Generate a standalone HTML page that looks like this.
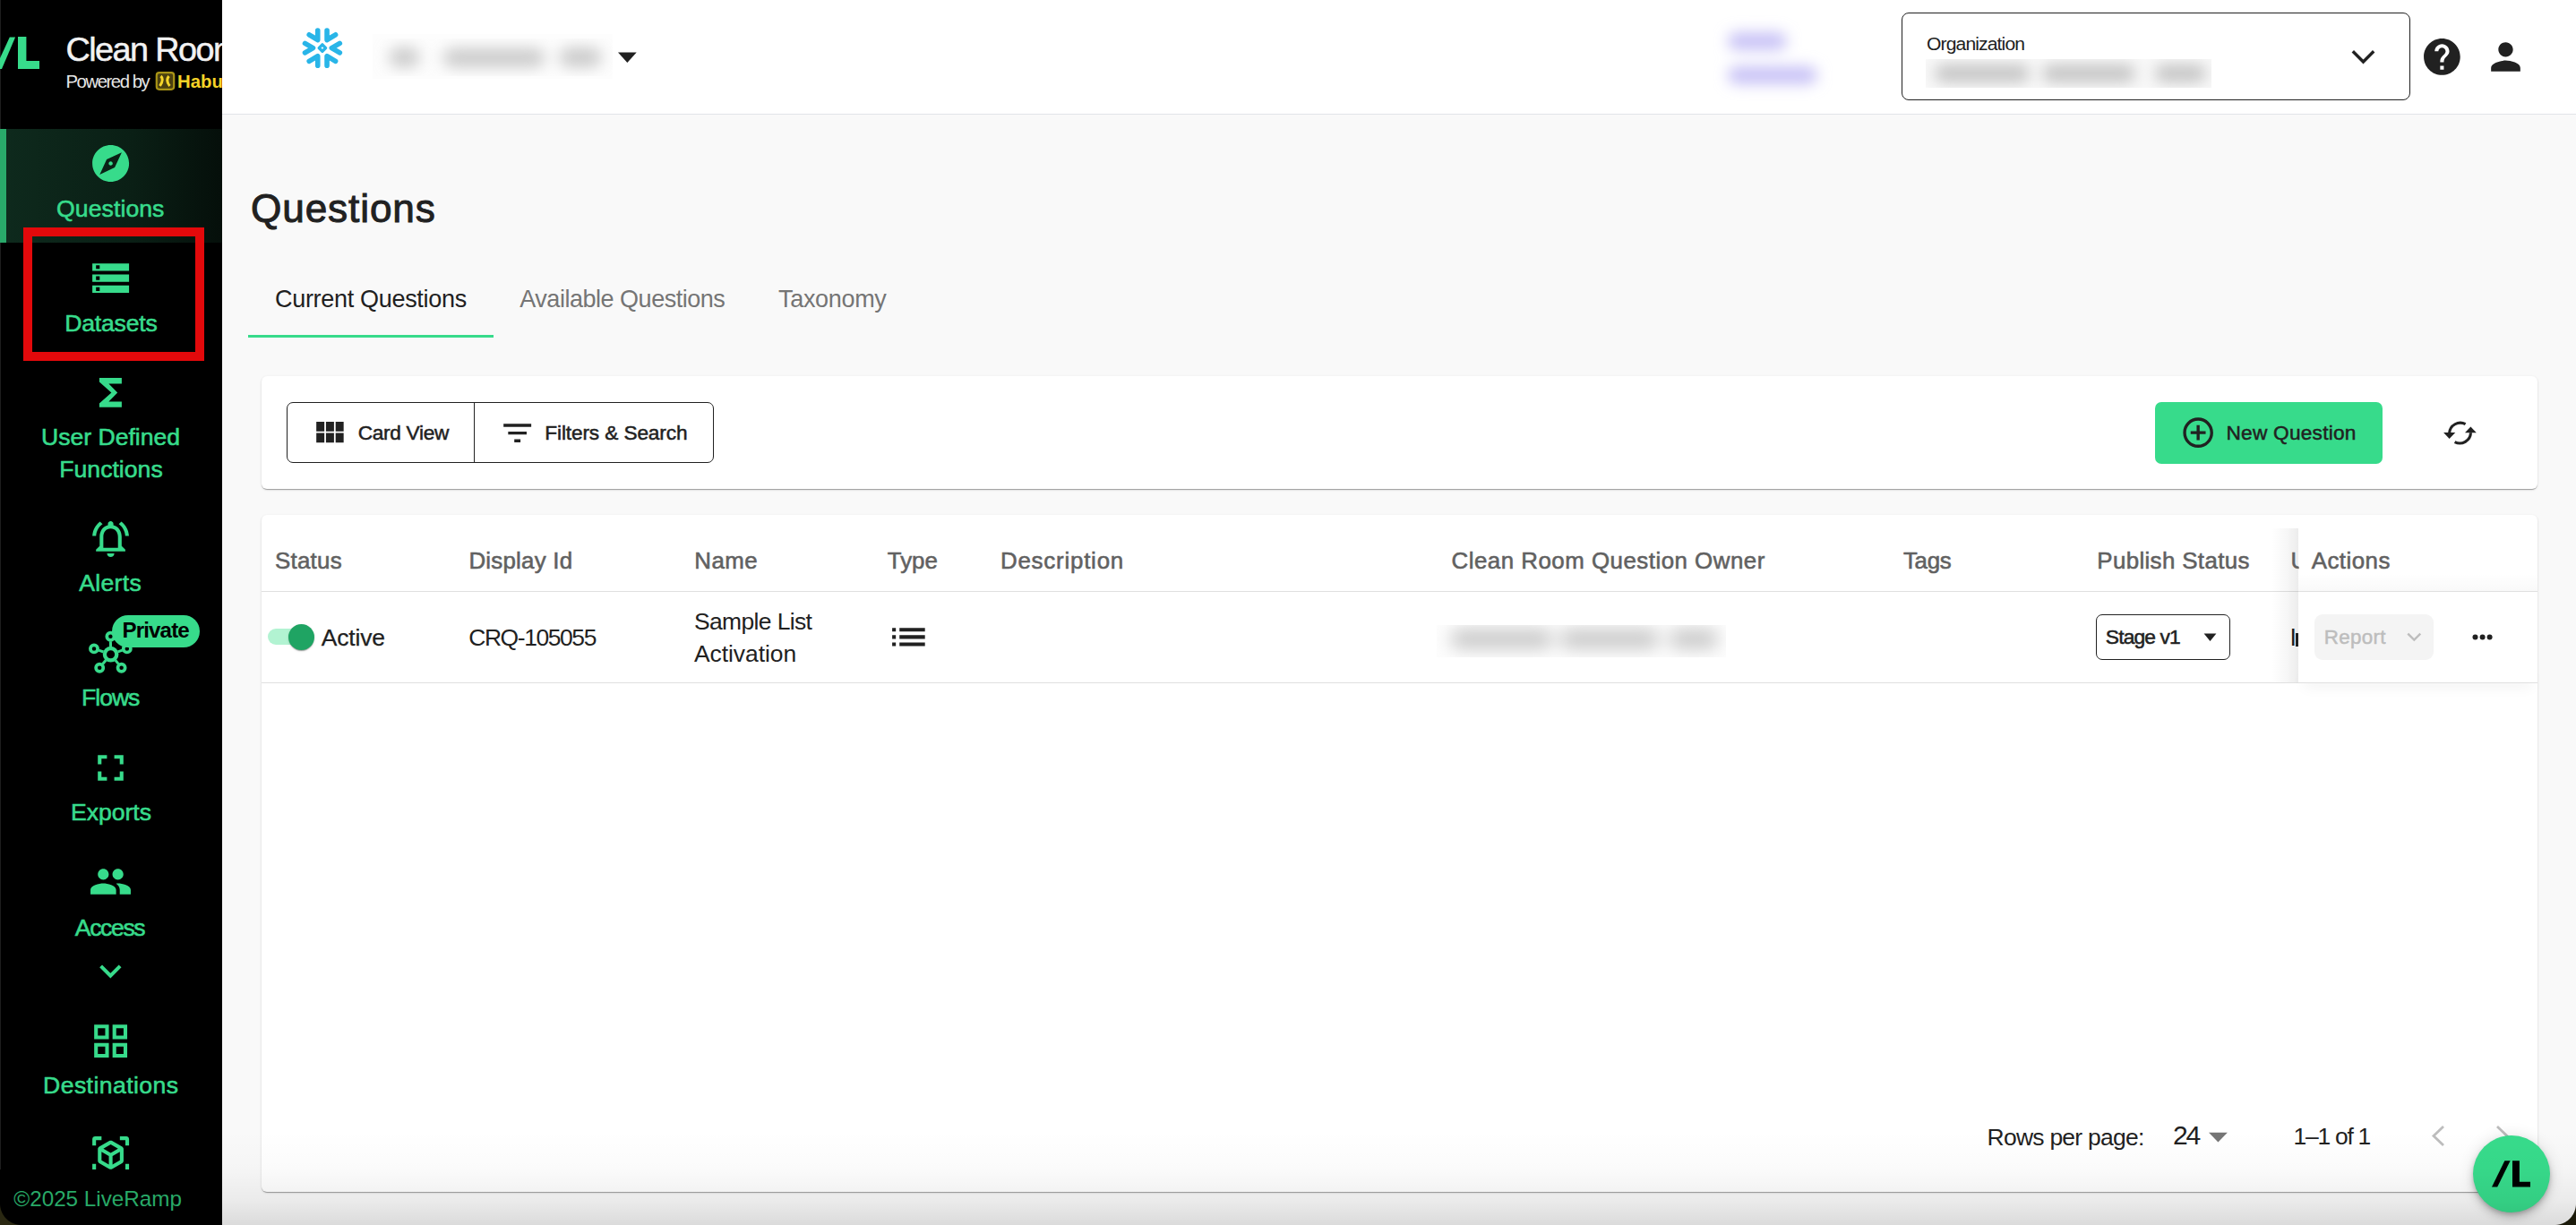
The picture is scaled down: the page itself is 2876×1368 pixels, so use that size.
<!DOCTYPE html>
<html><head><meta charset="utf-8"><style>
*{margin:0;padding:0;box-sizing:border-box}
html,body{width:2876px;height:1368px;overflow:hidden;background:#f9f9f9;font-family:"Liberation Sans",sans-serif;position:relative}
.t{position:absolute;white-space:nowrap}
.a{position:absolute}
</style></head><body>
<div class="a" style="left:248px;top:0px;width:2628px;height:127px;background:#fff"></div><div class="a" style="left:248px;top:127px;width:2628px;height:1px;background:#e1e4e8"></div><div class="a" style="left:0px;top:0px;width:248px;height:1368px;background:#000"></div><div class="a" style="left:0px;top:0px;width:1.2px;height:1368px;background:#1e1e1e"></div><div class="a" style="left:0px;top:144px;width:248px;height:127px;background:linear-gradient(90deg,#0e2a1d 0%,#0a1f15 60%,#050f0a 100%)"></div><div class="a" style="left:0px;top:144px;width:7px;height:127px;background:#29a96a"></div><svg class="a" style="left:0;top:0" width="248" height="130"><polygon fill="#37db8b" points="10.8,41.6 17.1,41.6 2.0,77 -5.5,77"/><polygon fill="#37db8b" points="20,41 29.4,41 29.4,68 44,68 44,77 20,77"/></svg><div class="a" style="left:0;top:0;width:248px;height:130px;overflow:hidden"><div class="t" style="left:73.50px;top:36.90px;font-size:37.79px;line-height:37.79px;font-weight:400;color:#f2f2f2;letter-spacing:-1.568px;-webkit-text-stroke:0.5px #f2f2f2;">Clean Room</div><div class="t" style="left:73.50px;top:80.67px;font-size:20.35px;line-height:20.35px;font-weight:400;color:#e6e6e6;letter-spacing:-1.471px;">Powered by</div><svg class="a" style="left:170px;top:76px" width="30" height="30" viewBox="170 76 30 30"><rect x="174.8" y="81.2" width="19.4" height="18.6" rx="3" fill="#4a4010" stroke="#a89416" stroke-width="2.2"/><g fill="none" stroke="#f5d52a" stroke-width="3"><path d="M179.5,85 Q183.5,88.5 178.5,96"/><path d="M188.5,85 Q184.5,90 189.5,96"/></g></svg><div class="t" style="left:198.00px;top:81.27px;font-size:20.35px;line-height:20.35px;font-weight:700;color:#f5d327;letter-spacing:0.000px;">Habu</div></div><div class="a" style="left:26.3px;top:253.8px;width:201.5px;height:149.2px;border:10px solid #e3090b"></div><svg class="a" style="left:98.90px;top:157.90px;" width="49.20" height="49.20" viewBox="0 0 24 24"><path fill="#37db8b" d="M12 10.9c-.61 0-1.1.49-1.1 1.1s.49 1.1 1.1 1.1c.61 0 1.1-.49 1.1-1.1s-.49-1.1-1.1-1.1zM12 2C6.48 2 2 6.48 2 12s4.48 10 10 10 10-4.48 10-10S17.52 2 12 2zm2.19 12.19L6 18l3.81-8.19L18 6l-3.81 8.19z"/></svg><svg class="a" style="left:99.00px;top:285.80px;" width="49.20" height="49.20" viewBox="0 0 24 24"><path fill="#37db8b" d="M2 20h20v-4H2v4zm2-3h2v2H4v-2zM2 4v4h20V4H2zm4 3H4V5h2v2zm-4 7h20v-4H2v4zm2-3h2v2H4v-2z"/></svg><svg class="a" style="left:0;top:0" width="248" height="470"><polygon fill="#37db8b" points="110.9,422 135.9,422 135.9,428.5 121.4,428.5 131.2,438.4 121.4,448.6 135.9,448.6 135.9,454.8 110.9,454.8 110.9,450.5 124.4,438.4 110.9,426.6"/></svg><svg class="a" style="left:99.05px;top:576.90px;" width="49.10" height="49.10" viewBox="0 0 24 24"><path fill="#37db8b" d="M12 22c1.1 0 2-.9 2-2h-4c0 1.1.9 2 2 2zm6-6v-5c0-3.07-1.63-5.64-4.5-6.32V4c0-.83-.67-1.5-1.5-1.5s-1.5.67-1.5 1.5v.68C7.64 5.36 6 7.92 6 11v5l-2 2v1h16v-1l-2-2zm-2 1H8v-6c0-2.48 1.51-4.5 4-4.5s4 2.02 4 4.5v6zM7.58 4.08L6.16 2.66C3.76 4.49 2.18 7.31 2.03 10.5h2c.15-2.65 1.51-4.97 3.55-6.42zm12.39 6.42h2c-.15-3.19-1.73-6.01-4.12-7.84l-1.42 1.42c2.02 1.45 3.39 3.77 3.54 6.42z"/></svg><svg class="a" style="left:99.00px;top:833.00px;" width="49.00" height="49.00" viewBox="0 0 24 24"><path fill="#37db8b" d="M7 14H5v5h5v-2H7v-3zm-2-4h2V7h3V5H5v5zm12 7h-3v2h5v-5h-2v3zM14 5v2h3v3h2V5h-5z"/></svg><svg class="a" style="left:99.00px;top:959.80px;" width="49.00" height="49.00" viewBox="0 0 24 24"><path fill="#37db8b" d="M16 11c1.66 0 2.99-1.34 2.99-3S17.66 5 16 5c-1.66 0-3 1.34-3 3s1.34 3 3 3zm-8 0c1.66 0 2.99-1.34 2.99-3S9.66 5 8 5C6.34 5 5 6.34 5 8s1.34 3 3 3zm0 2c-2.33 0-7 1.17-7 3.5V19h14v-2.5c0-2.33-4.67-3.5-7-3.5zm8 0c-.29 0-.62.02-.97.05 1.16.84 1.97 1.97 1.97 3.45V19h6v-2.5c0-2.33-4.67-3.5-7-3.5z"/></svg><svg class="a" style="left:98.80px;top:1059.60px;" width="48.70" height="48.70" viewBox="0 0 24 24"><path fill="#37db8b" d="M16.59 8.59L12 13.17 7.41 8.59 6 10l6 6 6-6z"/></svg><svg class="a" style="left:98.85px;top:1137.90px;" width="49.20" height="49.20" viewBox="0 0 24 24"><path fill="#37db8b" d="M3 3v8h8V3H3zm6 6H5V5h4v4zm-6 4v8h8v-8H3zm6 6H5v-4h4v4zm4-16v8h8V3h-8zm6 6h-4V5h4v4zm-6 4v8h8v-8h-8zm6 6h-4v-4h4v4z"/></svg><svg class="a" style="left:99.00px;top:1265.10px;" width="49.20" height="49.20" viewBox="0 0 24 24"><path fill="#37db8b" d="M18.25 7.6l-5.5-3.18c-.46-.27-1.04-.27-1.5 0L5.75 7.6c-.46.27-.75.76-.75 1.3v6.35c0 .54.29 1.03.75 1.3l5.5 3.18c.46.27 1.04.27 1.5 0l5.5-3.18c.46-.27.75-.76.75-1.3V8.9c0-.54-.29-1.03-.75-1.3zM7 14.96v-4.62l4 2.32v4.61l-4-2.31zm5-4.03L8 8.61l4-2.31 4 2.31-4 2.32zm1 6.34v-4.61l4-2.32v4.62l-4 2.31zM7 2H3.5C2.67 2 2 2.67 2 3.5V7h2V4h3V2zm10 0h3.5c.83 0 1.5.67 1.5 1.5V7h-2V4h-3V2zM7 22H3.5c-.83 0-1.5-.67-1.5-1.5V17h2v3h3v2zm10 0h3.5c.83 0 1.5-.67 1.5-1.5V17h-2v3h-3v2z"/></svg><svg class="a" style="left:90px;top:695px" width="70" height="70" viewBox="90 695 70 70"><g fill="none" stroke="#37db8b" stroke-width="3.4"><circle cx="123.6" cy="730.7" r="6.7" stroke-width="4.3"/><circle cx="123.4" cy="710.7" r="4.1" stroke-width="3.7"/><circle cx="105" cy="724.4" r="4.1" stroke-width="3.7"/><circle cx="141.8" cy="724.4" r="4.1" stroke-width="3.7"/><circle cx="111.2" cy="745.7" r="4.1" stroke-width="3.7"/><circle cx="135.6" cy="745.7" r="4.1" stroke-width="3.7"/></g><g stroke="#37db8b" stroke-width="3"><line x1="123.52" y1="722.20" x2="123.45" y2="716.20"/><line x1="115.55" y1="727.97" x2="110.21" y2="726.16"/><line x1="131.63" y1="727.92" x2="136.60" y2="726.20"/><line x1="118.18" y1="737.25" x2="114.70" y2="741.46"/><line x1="128.91" y1="737.34" x2="132.16" y2="741.41"/></g></svg><div class="a" style="left:125.3px;top:687px;width:97.6px;height:35.7px;background:#37db8b;border-radius:18px"></div><div class="t" style="left:136.50px;top:692.37px;font-size:24.13px;line-height:24.13px;font-weight:700;color:#000;letter-spacing:-0.878px;">Private</div><div class="t" style="left:63.09px;top:220.08px;font-size:26.60px;line-height:26.60px;font-weight:400;color:#37db8b;letter-spacing:0.073px;-webkit-text-stroke:0.59px #37db8b;">Questions</div><div class="t" style="left:72.29px;top:347.88px;font-size:26.60px;line-height:26.60px;font-weight:400;color:#37db8b;letter-spacing:-0.217px;-webkit-text-stroke:0.59px #37db8b;">Datasets</div><div class="t" style="left:45.99px;top:475.38px;font-size:26.60px;line-height:26.60px;font-weight:400;color:#37db8b;letter-spacing:-0.008px;-webkit-text-stroke:0.59px #37db8b;">User Defined</div><div class="t" style="left:66.29px;top:511.18px;font-size:26.60px;line-height:26.60px;font-weight:400;color:#37db8b;letter-spacing:0.014px;-webkit-text-stroke:0.59px #37db8b;">Functions</div><div class="t" style="left:88.29px;top:638.38px;font-size:26.60px;line-height:26.60px;font-weight:400;color:#37db8b;letter-spacing:0.291px;-webkit-text-stroke:0.59px #37db8b;">Alerts</div><div class="t" style="left:90.99px;top:766.08px;font-size:26.60px;line-height:26.60px;font-weight:400;color:#37db8b;letter-spacing:-1.002px;-webkit-text-stroke:0.59px #37db8b;">Flows</div><div class="t" style="left:79.09px;top:894.38px;font-size:26.60px;line-height:26.60px;font-weight:400;color:#37db8b;letter-spacing:-0.043px;-webkit-text-stroke:0.59px #37db8b;">Exports</div><div class="t" style="left:83.79px;top:1022.78px;font-size:26.60px;line-height:26.60px;font-weight:400;color:#37db8b;letter-spacing:-1.373px;-webkit-text-stroke:0.59px #37db8b;">Access</div><div class="t" style="left:48.09px;top:1199.08px;font-size:26.60px;line-height:26.60px;font-weight:400;color:#37db8b;letter-spacing:0.417px;-webkit-text-stroke:0.59px #37db8b;">Destinations</div><div class="a" style="left:0px;top:1306px;width:248px;height:62px;background:#000"></div><div class="t" style="left:15.30px;top:1326.55px;font-size:24.27px;line-height:24.27px;font-weight:400;color:#28a967;letter-spacing:-0.013px;">©2025 LiveRamp</div><svg class="a" style="left:320px;top:15px" width="80" height="80" viewBox="320 15 80 80"><g fill="none" stroke="#29b5e8" stroke-width="5.6" stroke-linecap="round" stroke-linejoin="round"><polyline points="345.20,38.80 354.75,44.50 354.75,34.00"/><polyline points="374.60,38.80 365.05,44.50 365.05,34.00"/><polyline points="345.20,68.40 354.75,62.70 354.75,73.20"/><polyline points="374.60,68.40 365.05,62.70 365.05,73.20"/><polyline points="340.50,48.40 349.50,53.60 340.50,58.80"/><polyline points="379.30,48.40 370.30,53.60 379.30,58.80"/><polygon stroke-width="3.4" points="356.2,53.6 359.9,49.9 363.59999999999997,53.6 359.9,57.300000000000004"/></g></svg><div class="a" style="left:416px;top:38px;width:268px;height:50px;background:#fdfdfd;overflow:hidden;"><svg style="position:absolute;left:-25.5px;top:-25.5px" width="319.0" height="101.0"><defs><filter id="bl1" x="-50%" y="-50%" width="200%" height="200%"><feGaussianBlur stdDeviation="8.5"/></filter></defs><g fill="#c8c8c8" filter="url(#bl1)"><rect x="43.5" y="40.5" width="34.0" height="21.0" rx="10.5"/><rect x="103.5" y="41.5" width="114.0" height="20.0" rx="10.0"/><rect x="233.5" y="40.5" width="47.0" height="21.0" rx="10.5"/></g></svg></div><svg class="a" style="left:685px;top:55px" width="30" height="20" viewBox="685 55 30 20"><polygon fill="#212121" points="690,58.4 710.7,58.4 700.35,70"/></svg><div class="a" style="left:1906px;top:22px;width:132px;height:88px;background:#ffffff;"><svg style="position:absolute;left:-24px;top:-24px" width="180" height="136"><defs><filter id="bl2" x="-50%" y="-50%" width="200%" height="200%"><feGaussianBlur stdDeviation="8"/></filter></defs><g fill="#c8c2f6" filter="url(#bl2)"><rect x="47.0" y="38.0" width="66.0" height="20.0" rx="10.0"/><rect x="47.0" y="76.0" width="100.0" height="20.0" rx="10.0"/></g></svg></div><div class="a" style="left:2122.8px;top:14px;width:568.5px;height:98px;border:1.6px solid #212121;border-radius:8px;background:#fff"></div><div class="t" style="left:2151.00px;top:38.46px;font-size:21.08px;line-height:21.08px;font-weight:400;color:#212121;letter-spacing:-0.864px;">Organization</div><div class="a" style="left:2150px;top:66px;width:319px;height:32px;background:#f8f8f8;overflow:hidden;"><svg style="position:absolute;left:-24px;top:-24px" width="367" height="80"><defs><filter id="bl3" x="-50%" y="-50%" width="200%" height="200%"><feGaussianBlur stdDeviation="8"/></filter></defs><g fill="#c6c6c6" filter="url(#bl3)"><rect x="34.0" y="30.0" width="106.0" height="20.0" rx="10.0"/><rect x="154.0" y="30.0" width="104.0" height="20.0" rx="10.0"/><rect x="280.0" y="30.0" width="57.0" height="20.0" rx="10.0"/></g></svg></div><svg class="a" style="left:2615px;top:45px" width="45" height="35" viewBox="2615 45 45 35"><polyline fill="none" stroke="#212121" stroke-width="3.4" points="2626.8,57.2 2638.5,69 2650.2,57.2"/></svg><svg class="a" style="left:2702.00px;top:39.00px;" width="48.80" height="48.80" viewBox="0 0 24 24"><path fill="#212121" d="M12 2C6.48 2 2 6.48 2 12s4.48 10 10 10 10-4.48 10-10S17.52 2 12 2zm1 17h-2v-2h2v2zm2.07-7.75l-.9.92C13.45 12.9 13 13.5 13 15h-2v-.5c0-1.1.45-2.1 1.17-2.83l1.24-1.26c.37-.36.59-.86.59-1.41 0-1.1-.9-2-2-2s-2 .9-2 2H8c0-2.21 1.79-4 4-4s4 1.79 4 4c0 .88-.36 1.68-.93 2.25z"/></svg><svg class="a" style="left:2772.90px;top:39.00px;" width="49.00" height="49.00" viewBox="0 0 24 24"><path fill="#212121" d="M12 12c2.21 0 4-1.79 4-4s-1.79-4-4-4-4 1.79-4 4 1.79 4 4 4zm0 2c-2.67 0-8 1.34-8 4v2h16v-2c0-2.66-5.33-4-8-4z"/></svg><div class="t" style="left:279.99px;top:211.09px;font-size:44.19px;line-height:44.19px;font-weight:400;color:#212121;letter-spacing:0.871px;-webkit-text-stroke:0.97px #212121;">Questions</div><div class="t" style="left:307.00px;top:321.01px;font-size:27.03px;line-height:27.03px;font-weight:400;color:#212121;letter-spacing:-0.318px;">Current Questions</div><div class="t" style="left:580.30px;top:321.01px;font-size:27.03px;line-height:27.03px;font-weight:400;color:#757575;letter-spacing:-0.486px;">Available Questions</div><div class="t" style="left:869.00px;top:321.01px;font-size:27.03px;line-height:27.03px;font-weight:400;color:#757575;letter-spacing:-0.326px;">Taxonomy</div><div class="a" style="left:276.9px;top:374px;width:273.9px;height:3px;background:#37db8b"></div><div class="a" style="left:292px;top:420px;width:2541px;height:126px;background:#fff;border-radius:6px;box-shadow:0 2px 1px -1px rgba(0,0,0,.2),0 1px 1px 0 rgba(0,0,0,.14),0 1px 3px 0 rgba(0,0,0,.12)"></div><div class="a" style="left:292px;top:575px;width:2541px;height:756px;background:#fff;border-radius:6px;box-shadow:0 2px 1px -1px rgba(0,0,0,.2),0 1px 1px 0 rgba(0,0,0,.14),0 1px 3px 0 rgba(0,0,0,.12)"></div><div class="a" style="left:320.3px;top:449.3px;width:476.5px;height:68.1px;border:1.3px solid #212121;border-radius:7px"></div><div class="a" style="left:529px;top:449.3px;width:1.3px;height:68.1px;background:#212121"></div><svg class="a" style="left:345.90px;top:462.40px;" width="43.06" height="43.06" viewBox="0 0 24 24"><path fill="#212121" d="M4 11h5V5H4v6zm0 7h5v-6H4v6zm6 0h5v-6h-5v6zm6 0h5v-6h-5v6zm-6-7h5V5h-5v6zm6-6v6h5V5h-5z"/></svg><div class="t" style="left:399.75px;top:471.70px;font-size:22.67px;line-height:22.67px;font-weight:400;color:#212121;letter-spacing:-0.313px;-webkit-text-stroke:0.50px #212121;">Card View</div><svg class="a" style="left:556.80px;top:462.65px;" width="41.30" height="41.30" viewBox="0 0 24 24"><path fill="#212121" d="M10 18h4v-2h-4v2zM3 6v2h18V6H3zm3 7h12v-2H6v2z"/></svg><div class="t" style="left:608.25px;top:471.70px;font-size:22.67px;line-height:22.67px;font-weight:400;color:#212121;letter-spacing:-0.122px;-webkit-text-stroke:0.50px #212121;">Filters &amp; Search</div><div class="a" style="left:2406px;top:449px;width:254px;height:68.8px;background:#37db8b;border-radius:7px"></div><svg class="a" style="left:2434.35px;top:463.10px;" width="40.30" height="40.30" viewBox="0 0 24 24"><path fill="#212121" d="M13 7h-2v4H7v2h4v4h2v-4h4v-2h-4V7zm-1-5C6.48 2 2 6.48 2 12s4.48 10 10 10 10-4.48 10-10S17.52 2 12 2zm0 18c-4.41 0-8-3.59-8-8s3.59-8 8-8 8 3.59 8 8-3.59 8-8 8z"/></svg><div class="t" style="left:2485.45px;top:471.70px;font-size:22.67px;line-height:22.67px;font-weight:400;color:#212121;letter-spacing:0.246px;-webkit-text-stroke:0.50px #212121;">New Question</div><svg class="a" style="left:2720px;top:460px" width="55" height="45" viewBox="2720 460 55 45"><g fill="none" stroke="#212121" stroke-width="3.1"><path d="M2752.6,473.6 A12.3,12.3 0 0 0 2734.6,483.6"/><path d="M2740.6,493.6 A12.3,12.3 0 0 0 2758.5,483.2"/></g><g fill="#212121"><polygon points="2728.1,483.1 2741.3,483.1 2734.6,489.9"/><polygon points="2752,483.3 2764.8,483.3 2758.4,476.6"/></g></svg><div class="t" style="left:306.98px;top:613.89px;font-size:25.87px;line-height:25.87px;font-weight:400;color:#616161;letter-spacing:0.277px;-webkit-text-stroke:0.57px #616161;">Status</div><div class="t" style="left:523.48px;top:613.89px;font-size:25.87px;line-height:25.87px;font-weight:400;color:#616161;letter-spacing:0.228px;-webkit-text-stroke:0.57px #616161;">Display Id</div><div class="t" style="left:775.28px;top:613.89px;font-size:25.87px;line-height:25.87px;font-weight:400;color:#616161;letter-spacing:0.451px;-webkit-text-stroke:0.57px #616161;">Name</div><div class="t" style="left:990.78px;top:613.89px;font-size:25.87px;line-height:25.87px;font-weight:400;color:#616161;letter-spacing:-0.004px;-webkit-text-stroke:0.57px #616161;">Type</div><div class="t" style="left:1116.98px;top:613.89px;font-size:25.87px;line-height:25.87px;font-weight:400;color:#616161;letter-spacing:0.787px;-webkit-text-stroke:0.57px #616161;">Description</div><div class="t" style="left:1620.48px;top:613.89px;font-size:25.87px;line-height:25.87px;font-weight:400;color:#616161;letter-spacing:0.502px;-webkit-text-stroke:0.57px #616161;">Clean Room Question Owner</div><div class="t" style="left:2124.98px;top:613.89px;font-size:25.87px;line-height:25.87px;font-weight:400;color:#616161;letter-spacing:-0.320px;-webkit-text-stroke:0.57px #616161;">Tags</div><div class="t" style="left:2341.28px;top:613.89px;font-size:25.87px;line-height:25.87px;font-weight:400;color:#616161;letter-spacing:0.368px;-webkit-text-stroke:0.57px #616161;">Publish Status</div><div class="a" style="left:292px;top:660px;width:2541px;height:1.3px;background:#e0e0e0"></div><div class="a" style="left:292px;top:762px;width:2541px;height:1.3px;background:#e0e0e0"></div><div class="a" style="left:298.8px;top:702.3px;width:44px;height:17.4px;background:#b2f3d2;border-radius:9px"></div><div class="a" style="left:321.8px;top:697px;width:29px;height:29px;background:#1fa463;border-radius:50%;box-shadow:0 2px 1px -1px rgba(0,0,0,.2),0 1px 1px 0 rgba(0,0,0,.14),0 1px 3px 0 rgba(0,0,0,.12)"></div><div class="t" style="left:358.80px;top:698.80px;font-size:26.45px;line-height:26.45px;font-weight:400;color:#212121;letter-spacing:-0.177px;-webkit-text-stroke:0.25px #212121;">Active</div><div class="t" style="left:523.20px;top:698.80px;font-size:26.45px;line-height:26.45px;font-weight:400;color:#212121;letter-spacing:-1.401px;">CRQ-105055</div><div class="t" style="left:775.00px;top:680.70px;font-size:26.45px;line-height:26.45px;font-weight:400;color:#212121;letter-spacing:-0.622px;">Sample List</div><div class="t" style="left:775.00px;top:716.70px;font-size:26.45px;line-height:26.45px;font-weight:400;color:#212121;letter-spacing:-0.053px;">Activation</div><svg class="a" style="left:990.10px;top:686.90px;" width="48.80" height="48.80" viewBox="0 0 24 24"><path fill="#212121" d="M3 13h2v-2H3v2zm0 4h2v-2H3v2zm0-8h2V7H3v2zm4 4h14v-2H7v2zm0 4h14v-2H7v2zM7 7v2h14V7H7z"/></svg><div class="a" style="left:1604px;top:698px;width:323px;height:36px;background:#fdfdfd;overflow:hidden;"><svg style="position:absolute;left:-28.5px;top:-28.5px" width="380.0" height="93.0"><defs><filter id="bl4" x="-50%" y="-50%" width="200%" height="200%"><feGaussianBlur stdDeviation="9.5"/></filter></defs><g fill="#c9c9c9" filter="url(#bl4)"><rect x="43.5" y="32.5" width="114.0" height="22.0" rx="11.0"/><rect x="165.5" y="32.5" width="111.0" height="22.0" rx="11.0"/><rect x="287.5" y="32.5" width="55.0" height="22.0" rx="11.0"/></g></svg></div><div class="a" style="left:2340px;top:686px;width:149.5px;height:50.5px;border:1.3px solid #212121;border-radius:7px"></div><div class="t" style="left:2350.85px;top:700.28px;font-size:22.82px;line-height:22.82px;font-weight:400;color:#212121;letter-spacing:-0.875px;-webkit-text-stroke:0.50px #212121;">Stage v1</div><svg class="a" style="left:2455px;top:700px" width="25" height="20" viewBox="2455 700 25 20"><polygon fill="#212121" points="2460.6,707.6 2474.4,707.6 2467.5,716"/></svg><div class="t" style="left:2556.40px;top:698.96px;font-size:26.74px;line-height:26.74px;font-weight:400;color:#212121;letter-spacing:0.000px;">I</div><div class="a" style="left:2563.4px;top:707px;width:2.6px;height:14.6px;background:#212121"></div><div class="a" style="left:2536px;top:590px;width:30px;height:172px;background:linear-gradient(90deg,rgba(0,0,0,0),rgba(0,0,0,.035) 60%,rgba(0,0,0,.075))"></div><div class="a" style="left:2566px;top:740px;width:267px;height:22px;background:#fff;box-shadow:0 10px 16px -6px rgba(0,0,0,.07)"></div><div class="a" style="left:2566px;top:590px;width:267px;height:172px;background:#fff"></div><div class="a" style="left:2566px;top:640px;width:267px;height:20px;background:linear-gradient(180deg,rgba(0,0,0,0),rgba(0,0,0,.025))"></div><div class="a" style="left:2566px;top:660px;width:267px;height:1.3px;background:#e0e0e0"></div><div class="a" style="left:2566px;top:762px;width:267px;height:1.3px;background:#e0e0e0"></div><div class="t" style="left:2580.78px;top:613.89px;font-size:25.87px;line-height:25.87px;font-weight:400;color:#616161;letter-spacing:0.462px;-webkit-text-stroke:0.57px #616161;">Actions</div><div class="t" style="left:2557.58px;top:613.89px;font-size:25.87px;line-height:25.87px;font-weight:400;color:#616161;letter-spacing:0.000px;-webkit-text-stroke:0.57px #616161;clip-path:inset(0 calc(100% - 9px) 0 0)">U</div><div class="a" style="left:2584.2px;top:686.1px;width:132.5px;height:50.7px;background:#f4f4f4;border-radius:9px"></div><div class="t" style="left:2594.75px;top:701.15px;font-size:22.38px;line-height:22.38px;font-weight:400;color:#bdbdbd;letter-spacing:0.311px;-webkit-text-stroke:0.49px #bdbdbd;">Report</div><svg class="a" style="left:2680px;top:700px" width="30" height="22" viewBox="2680 700 30 22"><polyline fill="none" stroke="#bdbdbd" stroke-width="2.4" points="2688.3,707.6 2695.3,714.6 2702.3,707.6"/></svg><svg class="a" style="left:2755px;top:703px" width="35" height="18" viewBox="2755 703 35 18"><g fill="#212121"><circle cx="2763.5" cy="711.5" r="3"/><circle cx="2771.6" cy="711.5" r="3"/><circle cx="2779.6" cy="711.5" r="3"/></g></svg><div class="t" style="left:2218.60px;top:1256.50px;font-size:26.45px;line-height:26.45px;font-weight:400;color:#212121;letter-spacing:-0.731px;">Rows per page:</div><div class="t" style="left:2426.00px;top:1253.43px;font-size:30.09px;line-height:30.09px;font-weight:400;color:#212121;letter-spacing:-2.197px;">24</div><svg class="a" style="left:2460px;top:1260px" width="30" height="20" viewBox="2460 1260 30 20"><polygon fill="#757575" points="2466,1264.8 2486.9,1264.8 2476.45,1275.4"/></svg><div class="t" style="left:2560.60px;top:1256.30px;font-size:26.45px;line-height:26.45px;font-weight:400;color:#212121;letter-spacing:-1.261px;">1–1 of 1</div><svg class="a" style="left:2700px;top:1250px" width="110" height="40" viewBox="2700 1250 110 40"><g fill="none" stroke="#bdbdbd" stroke-width="2.8"><polyline points="2728,1258 2717,1268.5 2728,1279"/><polyline points="2788,1258 2799,1268.5 2788,1279"/></g></svg><div class="a" style="left:2761px;top:1267.5px;width:86px;height:86px;background:#37db8b;border-radius:50%;box-shadow:0 3px 5px -1px rgba(0,0,0,.2),0 6px 10px 0 rgba(0,0,0,.14),0 1px 18px 0 rgba(0,0,0,.12)"></div><svg class="a" style="left:2770px;top:1290px" width="60" height="40" viewBox="2770 1290 60 40"><g fill="#000"><polygon points="2796.4,1296.2 2802.6,1296.2 2788.2,1325.6 2782,1325.6"/><polygon points="2805,1296.2 2812.9,1296.2 2812.9,1319.7 2825,1319.7 2825,1325.6 2805,1325.6"/></g></svg><div class="a" style="left:248px;top:1262px;width:2628px;height:106px;background:linear-gradient(180deg,rgba(0,0,0,0) 0%,rgba(0,0,0,.015) 40%,rgba(0,0,0,.06) 75%,rgba(0,0,0,.12) 100%);pointer-events:none"></div><div class="a" style="left:0px;top:1344px;width:24px;height:24px;background:radial-gradient(circle at 100% 0%,rgba(0,0,0,0) 23.5px,#2a2812 24.5px)"></div><div class="a" style="left:2852px;top:1344px;width:24px;height:24px;background:radial-gradient(circle at 0% 0%,rgba(0,0,0,0) 23.5px,#1b1a0a 24.5px)"></div>
</body></html>
